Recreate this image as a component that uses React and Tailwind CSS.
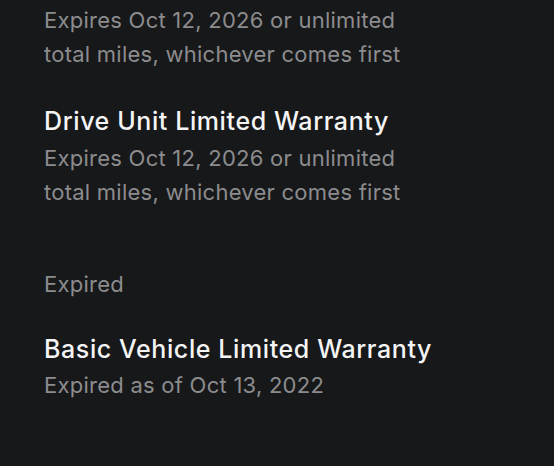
import React from 'react';

function App() {
    return (
        <div className="w-[554px] h-[466px] overflow-hidden bg-[#17181a] pl-[44px] pt-[3px] font-['Inter','Liberation_Sans',sans-serif] antialiased">
            <div className="flex flex-col">
                <div className="text-[22px] leading-[34px] tracking-[0.25px] text-[#8c8c8e]">
                    <p>Expires Oct 12, 2026 or unlimited</p>
                    <p>total miles, whichever comes first</p>
                </div>

                <p className="mt-[32px] text-[25px] leading-[36px] tracking-[0.6px] font-medium text-[#f4f4f4]">Drive Unit Limited Warranty</p>
                <div className="mt-[2px] text-[22px] leading-[34px] tracking-[0.25px] text-[#8c8c8e]">
                    <p>Expires Oct 12, 2026 or unlimited</p>
                    <p>total miles, whichever comes first</p>
                </div>

                <p className="mt-[58px] text-[22px] leading-[34px] tracking-[0.25px] text-[#8c8c8e]">Expired</p>

                <p className="mt-[30px] text-[25px] leading-[36px] tracking-[0.6px] font-medium text-[#f4f4f4]">Basic Vehicle Limited Warranty</p>
                <p className="mt-[1px] text-[22px] leading-[34px] tracking-[0.25px] text-[#8c8c8e]">Expired as of Oct 13, 2022</p>
            </div>
        </div>
    );
}

export default App;
